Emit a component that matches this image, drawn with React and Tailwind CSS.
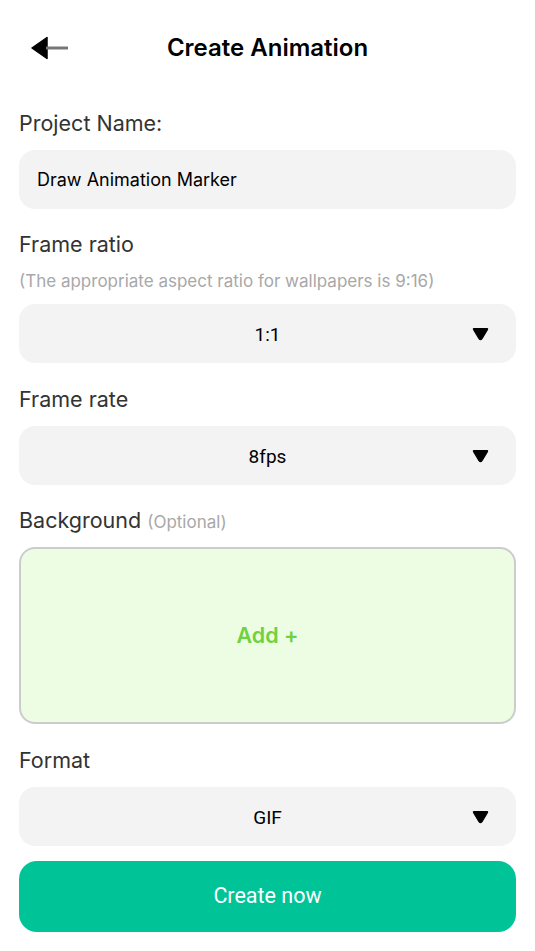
function Caret() {
  return (
    <svg width="17" height="14" viewBox="0 0 17 14" className="absolute right-[27px] top-1/2 -translate-y-1/2">
      <path d="M2 1.5 H15 Q16 1.5 15.4 2.6 L10 11.6 Q8.5 13.8 7 11.6 L1.6 2.6 Q1 1.5 2 1.5 Z" fill="#000" stroke="#000" strokeWidth="1.2" strokeLinejoin="round" />
    </svg>
  );
}

function Select({ value }) {
  return (
    <div className="relative mt-[13px] h-[59px] rounded-[16px] bg-[#f3f3f3] flex items-center justify-center">
      <span className="text-[19px] leading-none pt-[2px] text-black" style={{ fontFamily: "Roboto, sans-serif" }}>{value}</span>
      <Caret />
    </div>
  );
}

function Label({ children, className = "" }) {
  return (
    <div className={`text-[21.5px] leading-[28px] text-[#333] ${className}`}>{children}</div>
  );
}

export default function App() {
  return (
    <div className="w-[535px] h-[951px] bg-white px-[19px] overflow-hidden" style={{ fontFamily: "Inter, 'Noto Sans', sans-serif" }}>
      {/* header */}
      <div className="relative h-24 flex items-center justify-center">
        <svg width="38" height="24" viewBox="0 0 38 24" className="absolute left-[12px] top-1/2 -translate-y-1/2">
          <path d="M1 12 L16 1.5 V22.5 Z" fill="#000" stroke="#000" strokeWidth="1.5" strokeLinejoin="round" />
          <line x1="15" y1="12" x2="37" y2="12" stroke="#777" strokeWidth="3" />
        </svg>
        <h1 className="text-[24px] font-semibold text-black">Create Animation</h1>
      </div>

      <Label className="mt-[13px]">Project Name:</Label>
      <div className="mt-[13px] h-[59px] rounded-[16px] bg-[#f3f3f3] flex items-center px-[18px]">
        <span className="text-[18px] text-black">Draw Animation Marker</span>
      </div>

      <Label className="mt-[21px]">Frame ratio</Label>
      <div className="mt-[12px] text-[17px] leading-[22px] text-[#a8a8a8]">(The appropriate aspect ratio for wallpapers is 9:16)</div>
      <div className="-mt-px">
        <Select value="1:1" />
      </div>

      <Label className="mt-[22px]">Frame rate</Label>
      <Select value="8fps" />

      <Label className="mt-[21px]">
        Background <span className="text-[17px] leading-none text-[#a8a8a8]">(Optional)</span>
      </Label>
      <div className="mt-[13px] h-[177px] rounded-[16px] bg-[#edfde4] border-2 border-[#cccccc] flex items-center justify-center">
        <span className="text-[21.5px] font-semibold text-[#6fd23e]">Add +</span>
      </div>

      <Label className="mt-[22px]">Format</Label>
      <Select value="GIF" />

      <button className="mt-[15px] w-full h-[71px] rounded-[18px] bg-[#00c497] text-white text-[21.5px]" style={{ fontFamily: "Roboto, sans-serif" }}>
        Create now
      </button>
    </div>
  );
}
